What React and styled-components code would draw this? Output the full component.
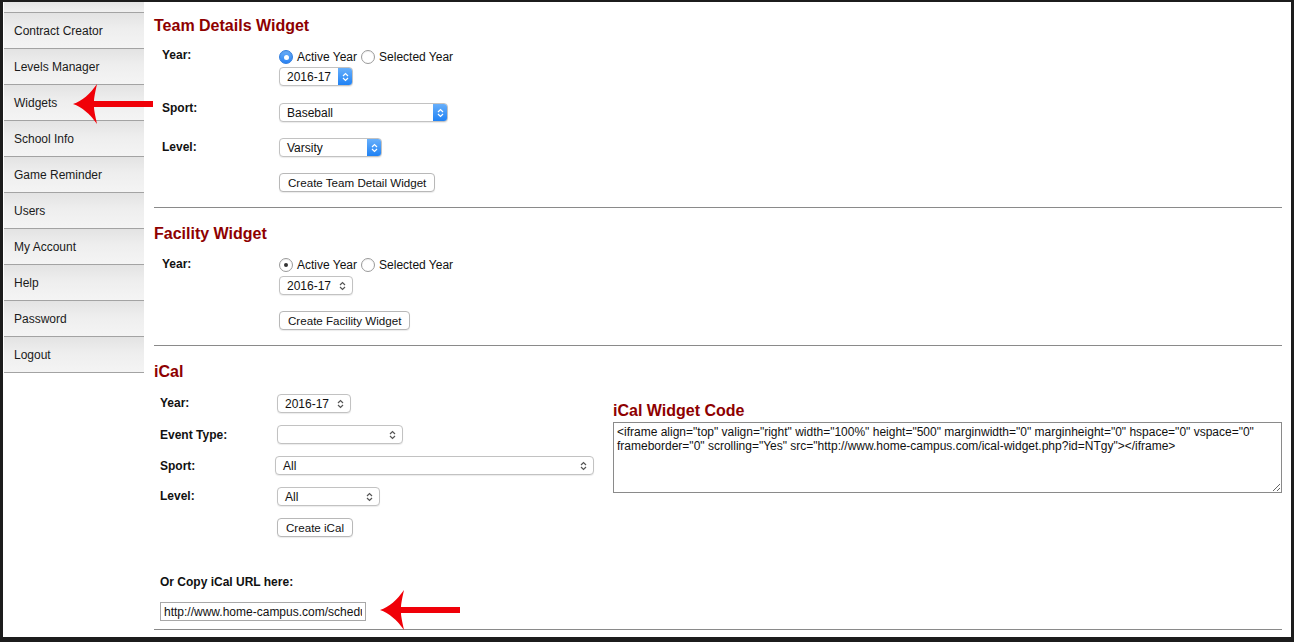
import React from 'react'
import styled, { createGlobalStyle } from 'styled-components'

const GlobalStyle = createGlobalStyle`
  html, body {
    margin: 0;
    padding: 0;
    background: #fff;
  }
  body {
    font-family: "Liberation Sans", Arial, Helvetica, sans-serif;
    color: #111;
  }
  * {
    box-sizing: border-box;
  }
`

const Frame = styled.div`
  position: relative;
  width: 1294px;
  height: 642px;
  border-style: solid;
  border-color: #1c1c1c;
  border-width: 2px 3px 5px 3px;
  display: flex;
  align-items: flex-start;
  overflow: hidden;
  background: #fff;
`

const Sidebar = styled.nav`
  margin-left: 1px;
  width: 140px;
  padding-top: 10px;
  background: linear-gradient(#e4e4e4, #f0f0f0 10px, #f0f0f0);
  border-bottom: 1px solid #a3a3a3;
`

const NavItem = styled.div`
  height: 36px;
  border-top: 1px solid #a3a3a3;
  padding-left: 10px;
  display: flex;
  align-items: center;
  font-size: 12px;
  color: #1a1a1a;
  background: linear-gradient(#e3e3e3, #eeeeee 45%, #f4f4f4);
`

const Main = styled.main`
  flex: 1;
  padding: 13px 9px 0 10px;
`

const Heading = styled.h2`
  margin: ${p => p.$mt || 0}px 0 0;
  padding-top: 2px;
  font-size: 16px;
  line-height: 18px;
  font-weight: bold;
  color: #8e0000;
`

const FormRow = styled.div`
  display: grid;
  grid-template-columns: 117px auto;
  justify-content: start;
  margin-top: ${p => p.$mt || 0}px;
  padding-left: ${p => (p.$indent != null ? p.$indent : 8)}px;
`

const Label = styled.div`
  font-weight: bold;
  font-size: 12px;
  line-height: 16px;
  padding-top: ${p => (p.$pt || 0) + 1}px;
  color: #111;
`

const Control = styled.div`
  padding-top: ${p => p.$pt || 0}px;
  display: flex;
  flex-direction: column;
  align-items: flex-start;
  margin-left: ${p => p.$shift || 0}px;
`

const RadioLine = styled.div`
  height: 20px;
  padding-top: 2px;
  display: flex;
  align-items: center;
  font-size: 12px;
`

const RadioDot = styled.span`
  width: 14px;
  height: 14px;
  border-radius: 50%;
  margin-right: 4px;
  display: inline-flex;
  align-items: center;
  justify-content: center;
  background: ${p => (p.$variant === 'blue' ? 'linear-gradient(#6aaef8, #2a83f3)' : '#fff')};
  border: 1px solid ${p => (p.$variant === 'blue' ? '#2f7de0' : '#9a9a9a')};
  box-shadow: inset 0 1px 1px rgba(0, 0, 0, 0.06);

  &::after {
    content: '';
    display: ${p => (p.$variant === 'off' ? 'none' : 'block')};
    width: ${p => (p.$variant === 'blue' ? 5 : 4)}px;
    height: ${p => (p.$variant === 'blue' ? 5 : 4)}px;
    border-radius: 50%;
    background: ${p => (p.$variant === 'blue' ? '#fff' : '#333')};
  }
`

const RadioText = styled.span`
  margin-right: 4px;
`

const SelectBox = styled.div`
  position: relative;
  width: ${p => p.$w}px;
  height: 19px;
  margin-top: ${p => p.$mt || 0}px;
  border: 1px solid #c2c2c2;
  border-radius: 4px;
  background: #fff;
  box-shadow: 0 1px 1px rgba(0, 0, 0, 0.08);
  display: flex;
  align-items: center;
  padding-left: 7px;
  font-size: 12px;
  color: #111;
  overflow: hidden;
`

const SelectText = styled.span`
  flex: 1;
`

const BlueStepper = styled.span`
  width: 15px;
  align-self: stretch;
  margin: -1px -1px -1px 0;
  border-radius: 0 4px 4px 0;
  background: linear-gradient(#6cb2fb, #1b7ff4);
  display: flex;
  align-items: center;
  justify-content: center;
`

const PlainStepper = styled.span`
  width: 16px;
  display: flex;
  align-items: center;
  justify-content: center;
  margin-right: 2px;
`

const Button = styled.button`
  margin-top: ${p => p.$mt || 0}px;
  height: 19px;
  padding: 0 8px;
  border: 1px solid #b8b8b8;
  border-radius: 4px;
  background: #fff;
  box-shadow: 0 1px 1px rgba(0, 0, 0, 0.08);
  font-family: "Liberation Sans", Arial, Helvetica, sans-serif;
  font-size: 11.6px;
  color: #111;
`

const Rule = styled.div`
  margin-top: ${p => p.$mt || 0}px;
  height: 0;
  border-top: 1px solid #8a8a8a;
`

const Split = styled.div`
  display: flex;
  margin-top: 13px;
`

const LeftCol = styled.div`
  width: 459px;
`

const RightCol = styled.div`
  flex: 1;
  padding-top: 6px;
`

const CopyLabel = styled(Label)`
  margin-top: 36px;
  padding-left: 6px;
`

const UrlInput = styled.input`
  display: block;
  margin: 12px 0 0 6px;
  width: 206px;
  height: 19px;
  padding: 0 3px;
  border: 1px solid #a8a8a8;
  font-family: "Liberation Sans", Arial, Helvetica, sans-serif;
  font-size: 12px;
  color: #111;
  outline: none;
`

const CodeArea = styled.textarea`
  display: block;
  margin-top: 2px;
  width: 100%;
  height: 71px;
  padding: 2px 3px;
  border: 1px solid #8a8a8a;
  font-family: "Liberation Sans", Arial, Helvetica, sans-serif;
  font-size: 12px;
  line-height: 14px;
  color: #111;
  outline: none;
`

const Arrow = styled.svg`
  position: absolute;
  left: ${p => p.$x}px;
  top: ${p => p.$y}px;
`

const UpDown = ({ color }) => (
  <svg width="7" height="10" viewBox="0 0 7 10">
    <path d="M1 4 L3.5 1.5 L6 4 M1 6 L3.5 8.5 L6 6" fill="none" stroke={color} strokeWidth="1.2" />
  </svg>
)

const Select = ({ w, value, blue, mt }) => (
  <SelectBox $w={w} $mt={mt}>
    <SelectText>{value}</SelectText>
    {blue ? (
      <BlueStepper>
        <UpDown color="#fff" />
      </BlueStepper>
    ) : (
      <PlainStepper>
        <UpDown color="#555" />
      </PlainStepper>
    )}
  </SelectBox>
)

const RedArrow = ({ x, y }) => (
  <Arrow $x={x} $y={y} width="80" height="42" viewBox="0 0 80 42">
    <path
      d="M0 21 C9 18 17 11 24 1 C22 10 21 15 21 18 L80 18 L80 24 L21 24 C21 27 22 32 24 41 C17 31 9 24 0 21 Z"
      fill="#f00008"
    />
  </Arrow>
)

const navItems = [
  'Contract Creator',
  'Levels Manager',
  'Widgets',
  'School Info',
  'Game Reminder',
  'Users',
  'My Account',
  'Help',
  'Password',
  'Logout',
]

const iframeCode =
  '<iframe align="top" valign="right" width="100%" height="500" marginwidth="0" marginheight="0" hspace="0" vspace="0" frameborder="0" scrolling="Yes" src="http://www.home-campus.com/ical-widget.php?id=NTgy"></iframe>'

const App = () => (
  <>
    <GlobalStyle />
    <Frame>
      <Sidebar>
        {navItems.map(item => (
          <NavItem key={item}>{item}</NavItem>
        ))}
      </Sidebar>

      <Main>
        <Heading>Team Details Widget</Heading>
        <FormRow $mt={11}>
          <Label>Year:</Label>
          <Control>
            <RadioLine>
              <RadioDot $variant="blue" />
              <RadioText>Active Year</RadioText>
              <RadioDot $variant="off" />
              <RadioText>Selected Year</RadioText>
            </RadioLine>
            <Select w={74} value="2016-17" blue mt={1} />
          </Control>
        </FormRow>
        <FormRow $mt={13}>
          <Label>Sport:</Label>
          <Control $pt={4}>
            <Select w={169} value="Baseball" blue />
          </Control>
        </FormRow>
        <FormRow $mt={16}>
          <Label>Level:</Label>
          <Control>
            <Select w={103} value="Varsity" blue />
          </Control>
        </FormRow>
        <FormRow $mt={16}>
          <Label />
          <Control>
            <Button>Create Team Detail Widget</Button>
          </Control>
        </FormRow>
        <Rule $mt={15} />

        <Heading $mt={15}>Facility Widget</Heading>
        <FormRow $mt={11}>
          <Label $pt={1}>Year:</Label>
          <Control>
            <RadioLine>
              <RadioDot $variant="gray" />
              <RadioText>Active Year</RadioText>
              <RadioDot $variant="off" />
              <RadioText>Selected Year</RadioText>
            </RadioLine>
            <Select w={74} value="2016-17" mt={2} />
          </Control>
        </FormRow>
        <FormRow $mt={16}>
          <Label />
          <Control>
            <Button>Create Facility Widget</Button>
          </Control>
        </FormRow>
        <Rule $mt={15} />

        <Heading $mt={15}>iCal</Heading>
        <Split>
          <LeftCol>
            <FormRow $indent={6}>
              <Label>Year:</Label>
              <Control>
                <Select w={74} value="2016-17" />
              </Control>
            </FormRow>
            <FormRow $mt={12} $indent={6}>
              <Label $pt={1}>Event Type:</Label>
              <Control>
                <Select w={126} value="" />
              </Control>
            </FormRow>
            <FormRow $mt={12} $indent={6}>
              <Label $pt={1}>Sport:</Label>
              <Control $shift={-2}>
                <Select w={319} value="All" />
              </Control>
            </FormRow>
            <FormRow $mt={12} $indent={6}>
              <Label>Level:</Label>
              <Control>
                <Select w={103} value="All" />
              </Control>
            </FormRow>
            <FormRow $mt={12} $indent={6}>
              <Label />
              <Control>
                <Button>Create iCal</Button>
              </Control>
            </FormRow>
            <CopyLabel>Or Copy iCal URL here:</CopyLabel>
            <UrlInput readOnly defaultValue="http://www.home-campus.com/schedule/ical.php?id=NTgy" />
          </LeftCol>
          <RightCol>
            <Heading>iCal Widget Code</Heading>
            <CodeArea readOnly defaultValue={iframeCode} />
          </RightCol>
        </Split>
        <Rule $mt={8} />
      </Main>

      <RedArrow x={70} y={81} />
      <RedArrow x={377} y={587} />
    </Frame>
  </>
)

export default App
